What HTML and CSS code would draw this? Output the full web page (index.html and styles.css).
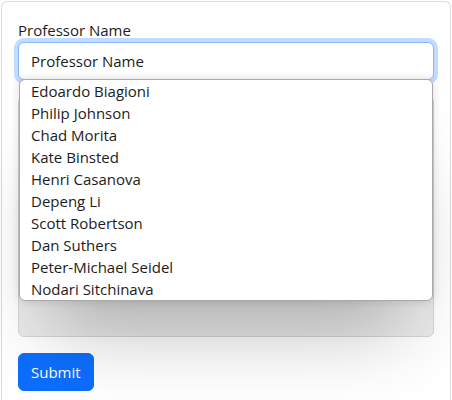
FILE: index.html
```html
<!DOCTYPE html>
<html lang="en">
<head>
<meta charset="utf-8">
<title>Professor Review</title>
<link rel="stylesheet" href="styles.css">
</head>
<body>
<div class="card">
  <form class="form">
    <div class="field">
      <label class="label" for="prof">Professor Name</label>
      <div class="combo">
        <div class="input">Professor Name</div>
        <ul class="popup">
          <li class="option">Edoardo Biagioni</li>
          <li class="option">Philip Johnson</li>
          <li class="option">Chad Morita</li>
          <li class="option">Kate Binsted</li>
          <li class="option">Henri Casanova</li>
          <li class="option">Depeng Li</li>
          <li class="option">Scott Robertson</li>
          <li class="option">Dan Suthers</li>
          <li class="option">Peter-Michael Seidel</li>
          <li class="option">Nodari Sitchinava</li>
        </ul>
      </div>
    </div>
    <div class="textarea"></div>
    <button class="btn" type="button">Submit</button>
  </form>
</div>
</body>
</html>
```

FILE: styles.css
```css
html, body {
  margin: 0;
  padding: 0;
  background: #fff;
}
body {
  font-family: "Open Sans", "Noto Sans", sans-serif;
  font-size: 15px;
  line-height: 24px;
  color: #1c1c1c;
  overflow: hidden;
}
.card {
  margin: 1px 1px 0 1px;
  border: 1px solid #dcdcdc;
  border-bottom: none;
  border-radius: 6px 6px 0 0;
  padding: 16px;
  height: 399px;
  box-sizing: border-box;
}
.form {
  display: flex;
  flex-direction: column;
  align-items: flex-start;
}
.field {
  align-self: stretch;
}
.label {
  display: block;
  line-height: 24px;
}
.combo {
  position: relative;
}
.input {
  box-sizing: border-box;
  height: 38px;
  padding: 6px 12px;
  border: 1px solid #86b7fe;
  border-radius: 6px;
  box-shadow: 0 0 0 4px rgba(13, 110, 253, 0.25);
  background: #fff;
}
.popup {
  position: absolute;
  z-index: 5;
  top: 37px;
  left: 1px;
  right: 1px;
  margin: 0;
  padding: 0;
  list-style: none;
  background: #fff;
  border: 1px solid #a9a9a9;
  border-radius: 6px;
  box-shadow: 0 0 10px rgba(0, 0, 0, 0.14), 0 60px 80px -30px rgba(0, 0, 0, 0.26);
}
.option {
  height: 22px;
  line-height: 22px;
  padding: 0 11px;
  white-space: nowrap;
}
.textarea {
  align-self: stretch;
  box-sizing: border-box;
  margin-top: 16px;
  height: 241px;
  border: 1px solid #d4d4d4;
  border-radius: 6px;
  background: #eaeaea;
}
.btn {
  margin-top: 16px;
  font-family: inherit;
  font-size: 15px;
  line-height: 24px;
  padding: 6px 12px;
  border: 1px solid #0d6efd;
  border-radius: 6px;
  background: #0d6efd;
  color: #fff;
}
```
